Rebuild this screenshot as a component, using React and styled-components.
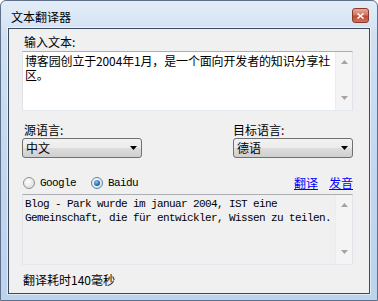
import styled, { createGlobalStyle } from 'styled-components'

// Style
const GlobalStyle = createGlobalStyle`
  html, body {
    margin: 0;
    padding: 0;
  }
  body {
    font-family: "Noto Sans CJK SC", "Noto Sans", sans-serif;
    font-size: 12px;
    color: #000000;
  }
`
const Window = styled.div`
  box-sizing: border-box;
  width: 378px;
  height: 301px;
  display: flex;
  flex-direction: column;
  padding: 0 7px 6px 7px;
  border: 1px solid #5f718a;
  border-radius: 6px 6px 0 0;
  background: linear-gradient(
    to bottom,
    #e4edf8 0%,
    #cfe0f3 12%,
    #c4d8ef 50%,
    #bcd3ec 100%
  );
`
const TitleBar = styled.div`
  height: 27px;
  display: flex;
  align-items: flex-start;
  padding: 7px 1px 0 3px;
  box-sizing: border-box;
`
const Title = styled.span`
  line-height: 14px;
  margin-top: 2px;
  font-size: 12px;
  color: #000000;
`
const CloseButton = styled.div`
  margin-left: auto;
  width: 17px;
  height: 15px;
  box-sizing: border-box;
  border: 1px solid #8a3a2c;
  border-radius: 3px;
  background: linear-gradient(to bottom, #e9a99a 0%, #d7745f 45%, #c24a30 55%, #d0725a 100%);
  display: flex;
  align-items: center;
  justify-content: center;
`
const Client = styled.div`
  flex: 1;
  display: flex;
  flex-direction: column;
  border: 1px solid #3b4a5c;
  background: #f0f0f0;
  padding: 6px 16px 0 13px;
  box-shadow: 0 0 0 1px rgba(255, 255, 255, 0.55);
`
const Label = styled.div`
  height: 14px;
  line-height: 14px;
  margin-left: ${({ $indent }) => $indent ?? 2}px;
`
const TextBox = styled.div`
  display: flex;
  height: ${({ $height }) => $height}px;
  margin-top: ${({ $top }) => $top}px;
  box-sizing: border-box;
  border: 1px solid;
  border-color: #abadb3 #e2e3ea #e3e9ef #e2e3ea;
  background: ${({ $readOnly }) => ($readOnly ? '#f0f0f0' : '#ffffff')};
`
const BoxText = styled.div`
  flex: 1;
  min-width: 0;
  padding: 2px 2px 0 2px;
  line-height: 14px;
  letter-spacing: -0.15px;
  white-space: pre;
  overflow: hidden;
`
const MonoText = styled.div`
  flex: 1;
  padding: 2px 2px 0 2px;
  font-family: "Liberation Mono", "DejaVu Sans Mono", monospace;
  font-size: 11px;
  letter-spacing: -0.6px;
  line-height: 14px;
  white-space: pre;
`
const Scrollbar = styled.div`
  width: 17px;
  display: flex;
  flex-direction: column;
  justify-content: space-between;
  align-items: center;
  padding: 8px 0 10px 0;
  box-sizing: border-box;
  background: #f4f4f4;
  border-left: 1px solid #ececec;
`
const SelectRow = styled.div`
  display: flex;
  justify-content: space-between;
  margin-top: 12px;
`
const Field = styled.div`
  width: 120px;
  display: flex;
  flex-direction: column;
`
const Select = styled.div`
  margin-top: 1px;
  height: 20px;
  box-sizing: border-box;
  display: flex;
  align-items: center;
  justify-content: space-between;
  padding: 0 4px 0 3px;
  border: 1px solid #707070;
  border-radius: 3px;
  background: linear-gradient(to bottom, #f2f2f2 0%, #ebebeb 50%, #dddddd 51%, #cfcfcf 100%);
  line-height: 14px;
`
const OptionRow = styled.div`
  display: flex;
  align-items: center;
  height: 16px;
  margin-top: 17px;
`
const RadioItem = styled.label`
  display: flex;
  align-items: center;
  margin-left: ${({ $gap }) => $gap}px;
  font-family: "Liberation Mono", "DejaVu Sans Mono", monospace;
  font-size: 11px;
  letter-spacing: -0.6px;
`
const RadioCircle = styled.span`
  width: 12px;
  height: 12px;
  box-sizing: border-box;
  border-radius: 50%;
  margin-right: 5px;
  display: flex;
  align-items: center;
  justify-content: center;
  border: 1px solid ${({ $checked }) => ($checked ? '#5586b1' : '#8e8f8f')};
  background: radial-gradient(circle at 40% 35%, #ffffff 0%, #e6e6e6 60%, #cfcfcf 100%);
  & > span {
    width: 6px;
    height: 6px;
    border-radius: 50%;
    background: radial-gradient(circle at 40% 35%, #8cc9f5 0%, #2a6ea8 55%, #143f66 100%);
  }
`
const Links = styled.div`
  margin-left: auto;
  display: flex;
  gap: 11px;
`
const Link = styled.a`
  color: #0000ff;
  text-decoration: underline;
  line-height: 14px;
  cursor: pointer;
`
const Status = styled.div`
  margin-top: 8px;
  margin-left: 1px;
  line-height: 14px;
`

// Functions
function Arrow({ down, color = '#a3a3a3' }) {
  return (
    <svg width="7" height="4" viewBox="0 0 7 4">
      <polygon
        points={down ? '0,0 7,0 3.5,4' : '0,4 7,4 3.5,0'}
        fill={color}
      />
    </svg>
  )
}

function ScrollTrack() {
  return (
    <Scrollbar>
      <Arrow />
      <Arrow down />
    </Scrollbar>
  )
}

function Radio({ checked, gap, children }) {
  return (
    <RadioItem $gap={gap}>
      <RadioCircle $checked={checked}>{checked && <span />}</RadioCircle>
      {children}
    </RadioItem>
  )
}

function Dropdown({ value }) {
  return (
    <Select>
      <span>{value}</span>
      <Arrow down color="#000000" />
    </Select>
  )
}

// Component
function App() {
  return (
    <>
      <GlobalStyle />
      <Window>
        <TitleBar>
          <Title>文本翻译器</Title>
          <CloseButton>
            <svg width="7" height="6" viewBox="0 0 7 6">
              <path d="M0.5 0.5 L6.5 5.5 M6.5 0.5 L0.5 5.5" stroke="#ffffff" strokeWidth="1.6" />
            </svg>
          </CloseButton>
        </TitleBar>
        <Client>
          <Label>输入文本:</Label>
          <TextBox $height={60} $top={2}>
            <BoxText>
              {'博客园创立于2004年1月，是一个面向开发者的知识分享社\n区。'}
            </BoxText>
            <ScrollTrack />
          </TextBox>
          <SelectRow>
            <Field>
              <Label>源语言:</Label>
              <Dropdown value="中文" />
            </Field>
            <Field>
              <Label $indent={0}>目标语言:</Label>
              <Dropdown value="德语" />
            </Field>
          </SelectRow>
          <OptionRow>
            <Radio gap={1}>Google</Radio>
            <Radio gap={15} checked>
              Baidu
            </Radio>
            <Links>
              <Link>翻译</Link>
              <Link>发音</Link>
            </Links>
          </OptionRow>
          <TextBox $height={71} $top={3} $readOnly>
            <MonoText>
              {'Blog - Park wurde im januar 2004, IST eine\nGemeinschaft, die für entwickler, Wissen zu teilen.'}
            </MonoText>
            <ScrollTrack />
          </TextBox>
          <Status>翻译耗时140毫秒</Status>
        </Client>
      </Window>
    </>
  )
}

export default App
